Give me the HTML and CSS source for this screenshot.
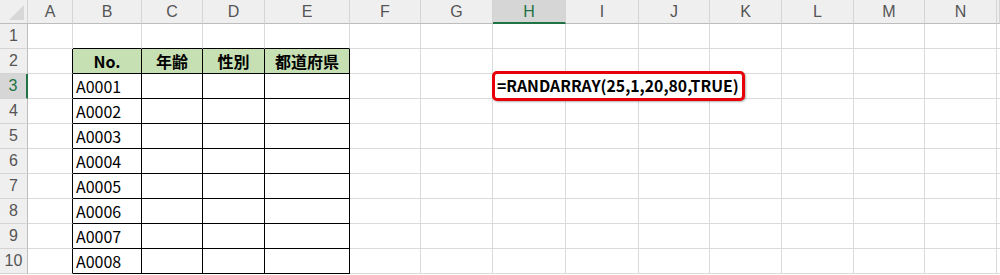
FILE: index.html
```html
<!doctype html>
<html>
<head>
<meta charset="utf-8">
<title>RANDARRAY</title>
<link rel="stylesheet" href="styles.css">
</head>
<body>
<div class="sheet">
	<!--列見出し-->
	<div class="corner"><span class="tri"></span></div>
	<div class="colh">A</div>
	<div class="colh">B</div>
	<div class="colh">C</div>
	<div class="colh">D</div>
	<div class="colh">E</div>
	<div class="colh">F</div>
	<div class="colh">G</div>
	<div class="colh sel">H</div>
	<div class="colh">I</div>
	<div class="colh">J</div>
	<div class="colh">K</div>
	<div class="colh">L</div>
	<div class="colh">M</div>
	<div class="colh">N</div>
	<div class="colh"></div>

	<!--1行目-->
	<div class="rowh">1</div>
	<div class="c"></div><div class="c bb"></div><div class="c bb"></div><div class="c bb"></div><div class="c bb"></div>
	<div class="c"></div><div class="c"></div><div class="c"></div><div class="c"></div><div class="c"></div>
	<div class="c"></div><div class="c"></div><div class="c"></div><div class="c"></div><div class="c"></div>

	<!--2行目 表の見出し-->
	<div class="rowh">2</div>
	<div class="c br"></div>
	<div class="c t th">No.</div>
	<div class="c t th">年齢</div>
	<div class="c t th">性別</div>
	<div class="c t th">都道府県</div>
	<div class="c"></div><div class="c"></div><div class="c"></div><div class="c"></div><div class="c"></div>
	<div class="c"></div><div class="c"></div><div class="c"></div><div class="c"></div><div class="c"></div>

	<!--3行目-->
	<div class="rowh act">3</div>
	<div class="c br"></div>
	<div class="c t">A0001</div><div class="c t"></div><div class="c t"></div><div class="c t"></div>
	<div class="c"></div><div class="c"></div>
	<div class="c formula"><span class="fbox">=RANDARRAY(25,1,20,80,TRUE)</span></div>
	<div class="c"></div><div class="c"></div>
	<div class="c"></div><div class="c"></div><div class="c"></div><div class="c"></div><div class="c"></div>

	<!--4行目-->
	<div class="rowh">4</div>
	<div class="c br"></div>
	<div class="c t">A0002</div><div class="c t"></div><div class="c t"></div><div class="c t"></div>
	<div class="c"></div><div class="c"></div><div class="c"></div><div class="c"></div><div class="c"></div>
	<div class="c"></div><div class="c"></div><div class="c"></div><div class="c"></div><div class="c"></div>

	<!--5行目-->
	<div class="rowh">5</div>
	<div class="c br"></div>
	<div class="c t">A0003</div><div class="c t"></div><div class="c t"></div><div class="c t"></div>
	<div class="c"></div><div class="c"></div><div class="c"></div><div class="c"></div><div class="c"></div>
	<div class="c"></div><div class="c"></div><div class="c"></div><div class="c"></div><div class="c"></div>

	<!--6行目-->
	<div class="rowh">6</div>
	<div class="c br"></div>
	<div class="c t">A0004</div><div class="c t"></div><div class="c t"></div><div class="c t"></div>
	<div class="c"></div><div class="c"></div><div class="c"></div><div class="c"></div><div class="c"></div>
	<div class="c"></div><div class="c"></div><div class="c"></div><div class="c"></div><div class="c"></div>

	<!--7行目-->
	<div class="rowh">7</div>
	<div class="c br"></div>
	<div class="c t">A0005</div><div class="c t"></div><div class="c t"></div><div class="c t"></div>
	<div class="c"></div><div class="c"></div><div class="c"></div><div class="c"></div><div class="c"></div>
	<div class="c"></div><div class="c"></div><div class="c"></div><div class="c"></div><div class="c"></div>

	<!--8行目-->
	<div class="rowh">8</div>
	<div class="c br"></div>
	<div class="c t">A0006</div><div class="c t"></div><div class="c t"></div><div class="c t"></div>
	<div class="c"></div><div class="c"></div><div class="c"></div><div class="c"></div><div class="c"></div>
	<div class="c"></div><div class="c"></div><div class="c"></div><div class="c"></div><div class="c"></div>

	<!--9行目-->
	<div class="rowh">9</div>
	<div class="c br"></div>
	<div class="c t">A0007</div><div class="c t"></div><div class="c t"></div><div class="c t"></div>
	<div class="c"></div><div class="c"></div><div class="c"></div><div class="c"></div><div class="c"></div>
	<div class="c"></div><div class="c"></div><div class="c"></div><div class="c"></div><div class="c"></div>

	<!--10行目-->
	<div class="rowh">10</div>
	<div class="c br"></div>
	<div class="c t">A0008</div><div class="c t"></div><div class="c t"></div><div class="c t"></div>
	<div class="c"></div><div class="c"></div><div class="c"></div><div class="c"></div><div class="c"></div>
	<div class="c"></div><div class="c"></div><div class="c"></div><div class="c"></div><div class="c"></div>
</div>
</body>
</html>
```

FILE: styles.css
```css
*{
	margin:0;
	padding:0;
	box-sizing:border-box;
}
html,body{
	width:1000px;
	height:275px;
	overflow:hidden;
	background:#fff;
}
.sheet{
	display:grid;
	grid-template-columns:28px 45px 69px 61px 62px 85px 71px 72px 73px 73px 71px 72px 72px 71px 72px 3px;
	grid-template-rows:24px repeat(10,25px);
	font-family:"Noto Sans CJK JP","Liberation Sans",sans-serif;
	font-size:16px;
	color:#000;
}
/*見出し*/
.corner{
	position:relative;
	background:#efefef;
	border-right:1px solid #d4d4d4;
	border-bottom:1px solid #bdbdbd;
}
.corner .tri{
	position:absolute;
	right:3px;
	bottom:3px;
	width:0;
	height:0;
	border-left:15px solid transparent;
	border-bottom:15px solid #d8d8d8;
}
.colh{
	background:#efefef;
	border-right:1px solid #d4d4d4;
	border-bottom:1px solid #bdbdbd;
	text-align:center;
	line-height:23px;
	color:#555;
	font-family:"Liberation Sans",sans-serif;
	font-size:16px;
}
.colh.sel{
	background:#d6d6d6;
	color:#217346;
	border-bottom:2px solid #217346;
}
.rowh{
	background:#efefef;
	border-right:1px solid #bdbdbd;
	border-bottom:1px solid #d4d4d4;
	text-align:center;
	line-height:24px;
	color:#555;
	font-family:"Liberation Sans",sans-serif;
	font-size:16px;
}
.rowh.act{
	background:#d6d6d6;
	color:#217346;
	border-right:2px solid #217346;
}
/*セル*/
.c{
	border-right:1px solid #dadada;
	border-bottom:1px solid #dadada;
	white-space:nowrap;
	line-height:24px;
	padding-left:3px;
}
.c.bb{
	border-bottom-color:#000;
}
.c.br{
	border-right-color:#000;
}
.c.t{
	border-right-color:#000;
	border-bottom-color:#000;
}
.c.th{
	background:#c6e0b4;
	font-weight:bold;
	text-align:center;
	padding-left:0;
}
.formula{
	position:relative;
}
.fbox{
	position:absolute;
	left:-1px;
	top:-3px;
	width:253px;
	height:30px;
	border:3px solid #e8000b;
	border-radius:5px;
	background:#fff;
	box-shadow:1px 1px 2px rgba(0,0,0,0.3);
	font-weight:bold;
	font-size:15.8px;
	line-height:24px;
	padding-left:2px;
}
```
